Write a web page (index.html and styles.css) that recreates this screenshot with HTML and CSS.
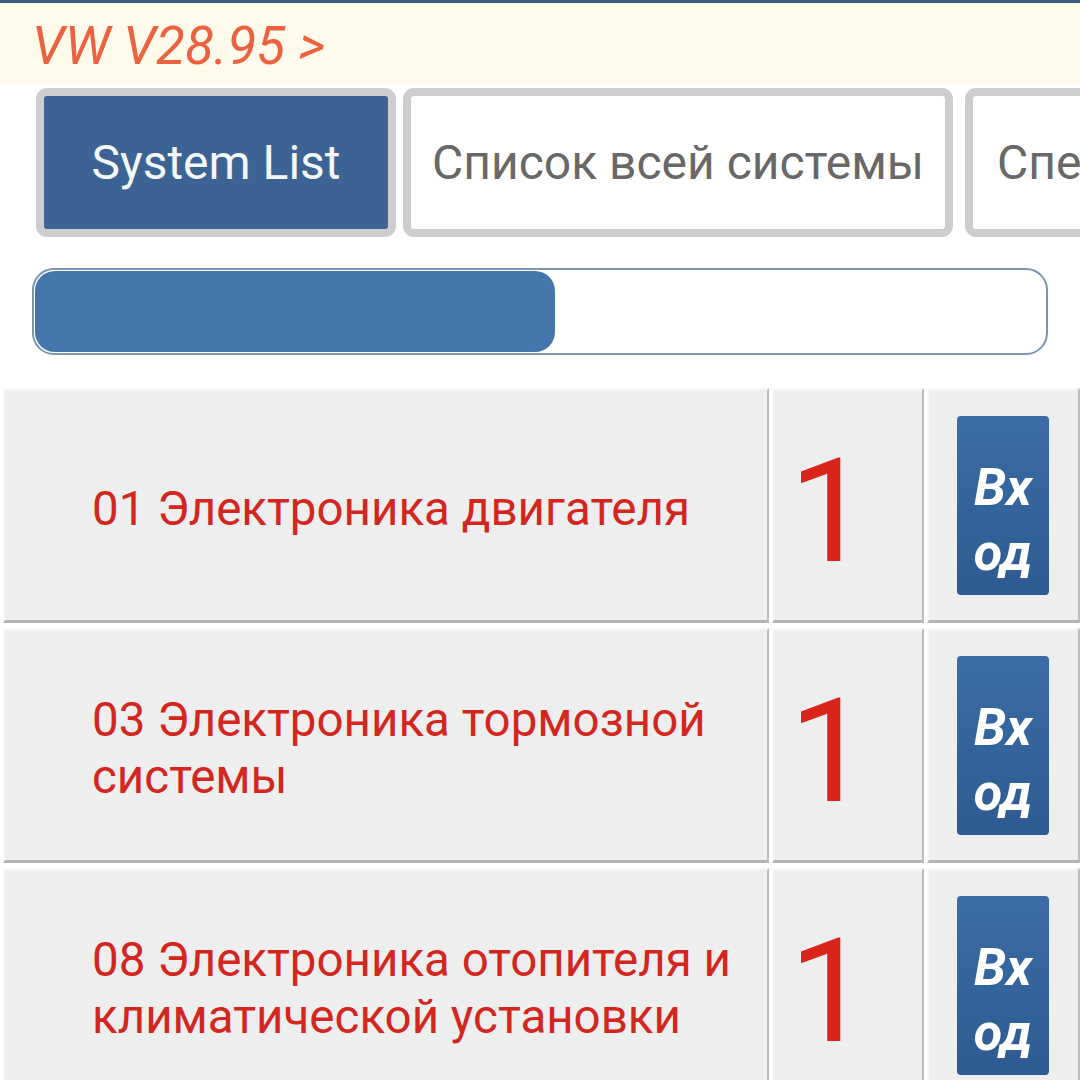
FILE: index.html
```html
<!DOCTYPE html>
<html lang="ru">
<head>
<meta charset="utf-8">
<title>VW V28.95</title>
<link rel="stylesheet" href="styles.css">
</head>
<body>
<div class="topline"></div>
<header class="title">VW V28.95 &gt;</header>

<nav class="tabs">
  <div class="tab tab-active tab-first">System List</div>
  <div class="tab tab-wide">Список всей системы</div>
  <div class="tab tab-last">Специальные функции</div>
</nav>

<div class="progress">
  <div class="progress-fill" style="width: 520px"></div>
</div>

<section class="list">
  <div class="row">
    <div class="cell cell-name">01 Электроника двигателя</div>
    <div class="cell cell-count">1</div>
    <div class="cell cell-action"><button class="enter">Вход</button></div>
  </div>
  <div class="row">
    <div class="cell cell-name">03 Электроника тормозной системы</div>
    <div class="cell cell-count">1</div>
    <div class="cell cell-action"><button class="enter">Вход</button></div>
  </div>
  <div class="row">
    <div class="cell cell-name">08 Электроника отопителя и климатической установки</div>
    <div class="cell cell-count">1</div>
    <div class="cell cell-action"><button class="enter">Вход</button></div>
  </div>
</section>
</body>
</html>
```

FILE: styles.css
```css
html, body {
  margin: 0;
  padding: 0;
  background: #ffffff;
}

body {
  width: 1080px;
  height: 1080px;
  overflow: hidden;
  font-family: Roboto, "Noto Sans", "Liberation Sans", sans-serif;
}

/* thin dark strip above the title bar */
.topline {
  height: 3px;
  background: #3c5a7c;
}

.title {
  height: 81px;
  background: #fffbea;
  padding-left: 32px;
  color: #ec6240;
  font-size: 53px;
  font-style: italic;
  line-height: 86px;
  white-space: nowrap;
}

/* tab strip */
.tabs {
  display: flex;
  gap: 7px;
  margin-top: 4px;
  padding-left: 36px;
  white-space: nowrap;
}

.tab {
  flex: none;
  box-sizing: border-box;
  height: 149px;
  border: 8px solid #cdcdcd;
  border-radius: 11px;
  background: #ffffff;
  color: #686868;
  font-size: 48px;
  line-height: 133px;
  padding-left: 21px;
  overflow: hidden;
}

.tab-first {
  width: 360px;
  text-align: center;
  padding-left: 0;
}

.tab-active {
  background: #3b6494;
  color: #f4f6f8;
}

.tab-wide {
  width: 550px;
}

.tab-last {
  width: 400px;
  margin-left: 5px;
  padding-left: 24px;
}

/* scan progress */
.progress {
  box-sizing: border-box;
  width: 1016px;
  height: 87px;
  margin: 31px 0 0 32px;
  border: 2px solid #7a95b2;
  border-radius: 22px;
  padding: 1px;
  background: #ffffff;
}

.progress-fill {
  height: 100%;
  border-radius: 20px;
  background: #4475ab;
}

/* system rows */
.list {
  margin-top: 33px;
  padding-left: 3px;
  display: flex;
  flex-direction: column;
  gap: 5px;
}

.row {
  display: grid;
  grid-template-columns: 766px 152px 153px;
  gap: 3px;
  height: 235px;
}

.cell {
  box-sizing: border-box;
  background: #eeeeee;
  border-top: 2px solid #f8f8f8;
  border-left: 2px solid #f8f8f8;
  border-right: 2px solid #bcbcbc;
  border-bottom: 3px solid #b4b4b4;
  display: flex;
  align-items: center;
}

.cell-name {
  padding: 8px 20px 0 87px;
  color: #d3261f;
  font-size: 47.5px;
  line-height: 57px;
}

.cell-count {
  padding: 14px 0 0 15px;
  color: #d9231b;
  font-size: 144px;
  line-height: 1;
}

.cell-action {
  align-items: flex-start;
  padding: 26px 0 0 28px;
}

.enter {
  box-sizing: border-box;
  width: 92px;
  height: 179px;
  border: none;
  border-radius: 4px;
  padding: 28px 8px 0;
  background: linear-gradient(#3c6ca6, #2d5b91);
  color: #ffffff;
  font-family: Roboto, "Noto Sans", "Liberation Sans", sans-serif;
  font-size: 52px;
  font-weight: bold;
  font-style: italic;
  line-height: 65px;
  text-align: center;
  word-break: break-all;
  display: block;
}
```
